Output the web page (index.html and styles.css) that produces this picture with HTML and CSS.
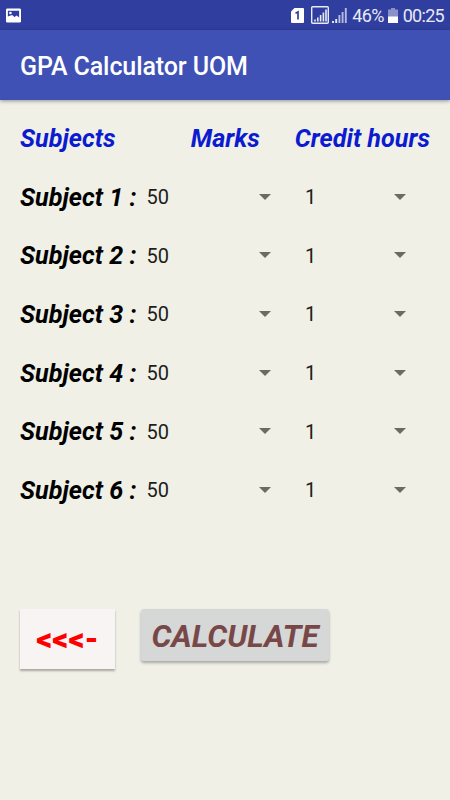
FILE: index.html
```
<!DOCTYPE html>
<html lang="en">
<head>
    <meta charset="UTF-8">
    <meta name="viewport" content="width=device-width, initial-scale=1.0">
    <title>GPA Calculator UOM</title>
    <link rel="stylesheet" href="styles.css">
</head>
<body>
    <div class="status-bar">
        <svg class="picture-icon" width="15" height="15" viewBox="0 0 16 15">
            <rect width="16" height="15" rx="1.5" fill="#fff"/>
            <path d="M2 2.5h12v7l-2.5-2L9 9 6.5 7 2 8.5z" fill="#303f9f"/>
            <circle cx="4.7" cy="4.8" r="1.4" fill="#fff"/>
        </svg>
        <div class="status-right">
            <svg class="sim-icon" width="13" height="15" viewBox="0 0 13 15">
                <path d="M3.5 0H12q1 0 1 1v13q0 1-1 1H1q-1 0-1-1V3.5z" fill="#fff"/>
                <path d="M4.5 5.3L7 4v7.5" fill="none" stroke="#303f9f" stroke-width="1.7"/>
            </svg>
            <svg class="signal-box" width="18" height="18" viewBox="0 0 18 18">
                <rect x=".7" y=".7" width="16.6" height="16.6" rx="1" fill="none" stroke="#e8eaf6" stroke-width="1.4"/>
                <path d="M4 15.5v-2M6.8 15.5v-4M9.6 15.5v-6.5M12.4 15.5v-9M15 15.5v-12" stroke="#e8eaf6" stroke-width="1.6"/>
            </svg>
            <svg class="signal" width="15" height="16" viewBox="0 0 15 16">
                <path d="M1 16v-2M4.2 16v-4" stroke="#e8eaf6" stroke-width="1.9"/>
                <path d="M7.4 16V8M10.6 16V5M13.8 16V1" stroke="#b5bbdf" stroke-width="1.9"/>
            </svg>
            <span class="battery-text">46%</span>
            <svg class="battery" width="10" height="15" viewBox="0 0 10 15">
                <path d="M3 0h4v1.5h3V9H0V1.5h3z" fill="#8991c8"/>
                <rect y="8.5" width="10" height="6.5" fill="#fff"/>
            </svg>
            <span class="clock">00:25</span>
        </div>
    </div>
    <header class="app-bar">
        <h1>GPA Calculator UOM</h1>
    </header>

    <main>
        <div class="head-row">
            <span class="head-subjects">Subjects</span>
            <span class="head-marks">Marks</span>
            <span>Credit hours</span>
        </div>
        <div class="row">
            <span class="subject">Subject 1 :</span>
            <div class="spinner marks">50</div>
            <div class="spinner credits">1</div>
        </div>
        <div class="row">
            <span class="subject">Subject 2 :</span>
            <div class="spinner marks">50</div>
            <div class="spinner credits">1</div>
        </div>
        <div class="row">
            <span class="subject">Subject 3 :</span>
            <div class="spinner marks">50</div>
            <div class="spinner credits">1</div>
        </div>
        <div class="row">
            <span class="subject">Subject 4 :</span>
            <div class="spinner marks">50</div>
            <div class="spinner credits">1</div>
        </div>
        <div class="row">
            <span class="subject">Subject 5 :</span>
            <div class="spinner marks">50</div>
            <div class="spinner credits">1</div>
        </div>
        <div class="row">
            <span class="subject">Subject 6 :</span>
            <div class="spinner marks">50</div>
            <div class="spinner credits">1</div>
        </div>

        <div class="buttons">
            <button type="button" class="back">&lt;&lt;&lt;-</button>
            <button type="button" class="calculate">CALCULATE</button>
        </div>
    </main>
</body>
</html>
```
FILE: styles.css
```
* {
    box-sizing: border-box;
}
body {
    margin: 0;
    height: 800px;
    overflow: hidden;
    background-color: #f0f0e7;
    font-family: Roboto, sans-serif;
}
.status-bar {
    display: flex;
    justify-content: space-between;
    height: 30px;
    padding: 0 6px;
    background-color: #303f9f;
    color: #e8eaf6;
    font-size: 18px;
    line-height: 32px;
    letter-spacing: -0.7px;
}
.picture-icon {
    margin-top: 8px;
}
.status-right {
    display: flex;
}
.sim-icon {
    margin: 8px 7px 0 0;
}
.signal-box {
    margin: 6px 3px 0 0;
}
.signal {
    margin: 7px 5px 0 0;
}
.battery {
    margin: 8px 5px 0 4px;
}
.app-bar {
    display: flex;
    align-items: center;
    height: 70px;
    padding: 2px 20px 0;
    background-color: #3f51b5;
    box-shadow: 0 1px 4px rgba(0, 0, 0, 0.4);
}
h1 {
    margin: 0;
    color: #fff;
    font-size: 25px;
    font-weight: 500;
    letter-spacing: -0.1px;
}
main {
    padding: 9px 20px 0;
}
.head-row,
.row {
    display: flex;
    align-items: center;
    height: 58.7px;
}
.head-row {
    color: #0b1bd0;
    font-size: 25.2px;
    font-weight: bold;
    font-style: italic;
    white-space: nowrap;
}
.head-subjects {
    width: 171px;
}
.head-marks {
    width: 104px;
}
.subject {
    width: 126.5px;
    font-size: 25.2px;
    font-weight: bold;
    font-style: italic;
    white-space: nowrap;
}
.spinner {
    display: flex;
    align-items: center;
    justify-content: space-between;
    color: #1d1d1b;
    font-size: 20px;
}
.spinner::after {
    content: "";
    margin-bottom: 1px;
    border: 6px solid transparent;
    border-top-color: #6b6b66;
    border-bottom: 0;
}
.marks {
    width: 124.5px;
}
.credits {
    width: 101px;
    margin-left: 34px;
}
.buttons {
    display: flex;
    align-items: flex-start;
    gap: 26px;
    margin-top: 89px;
}
button {
    border: 0;
    padding: 0;
    font-family: Roboto, sans-serif;
    font-weight: bold;
}
.back {
    width: 95px;
    height: 60px;
    padding-top: 2px;
    background-color: #f8f4f4;
    color: #f00;
    font-size: 31.5px;
    font-weight: 900;
    box-shadow: 0 2px 2px rgba(0, 0, 0, 0.3);
}
.calculate {
    width: 188px;
    height: 52px;
    padding-top: 4px;
    border-radius: 3px;
    background-color: #d6d7d7;
    color: #784848;
    font-size: 31.4px;
    font-style: italic;
    box-shadow: 0 2px 3px rgba(0, 0, 0, 0.3);
}
```
